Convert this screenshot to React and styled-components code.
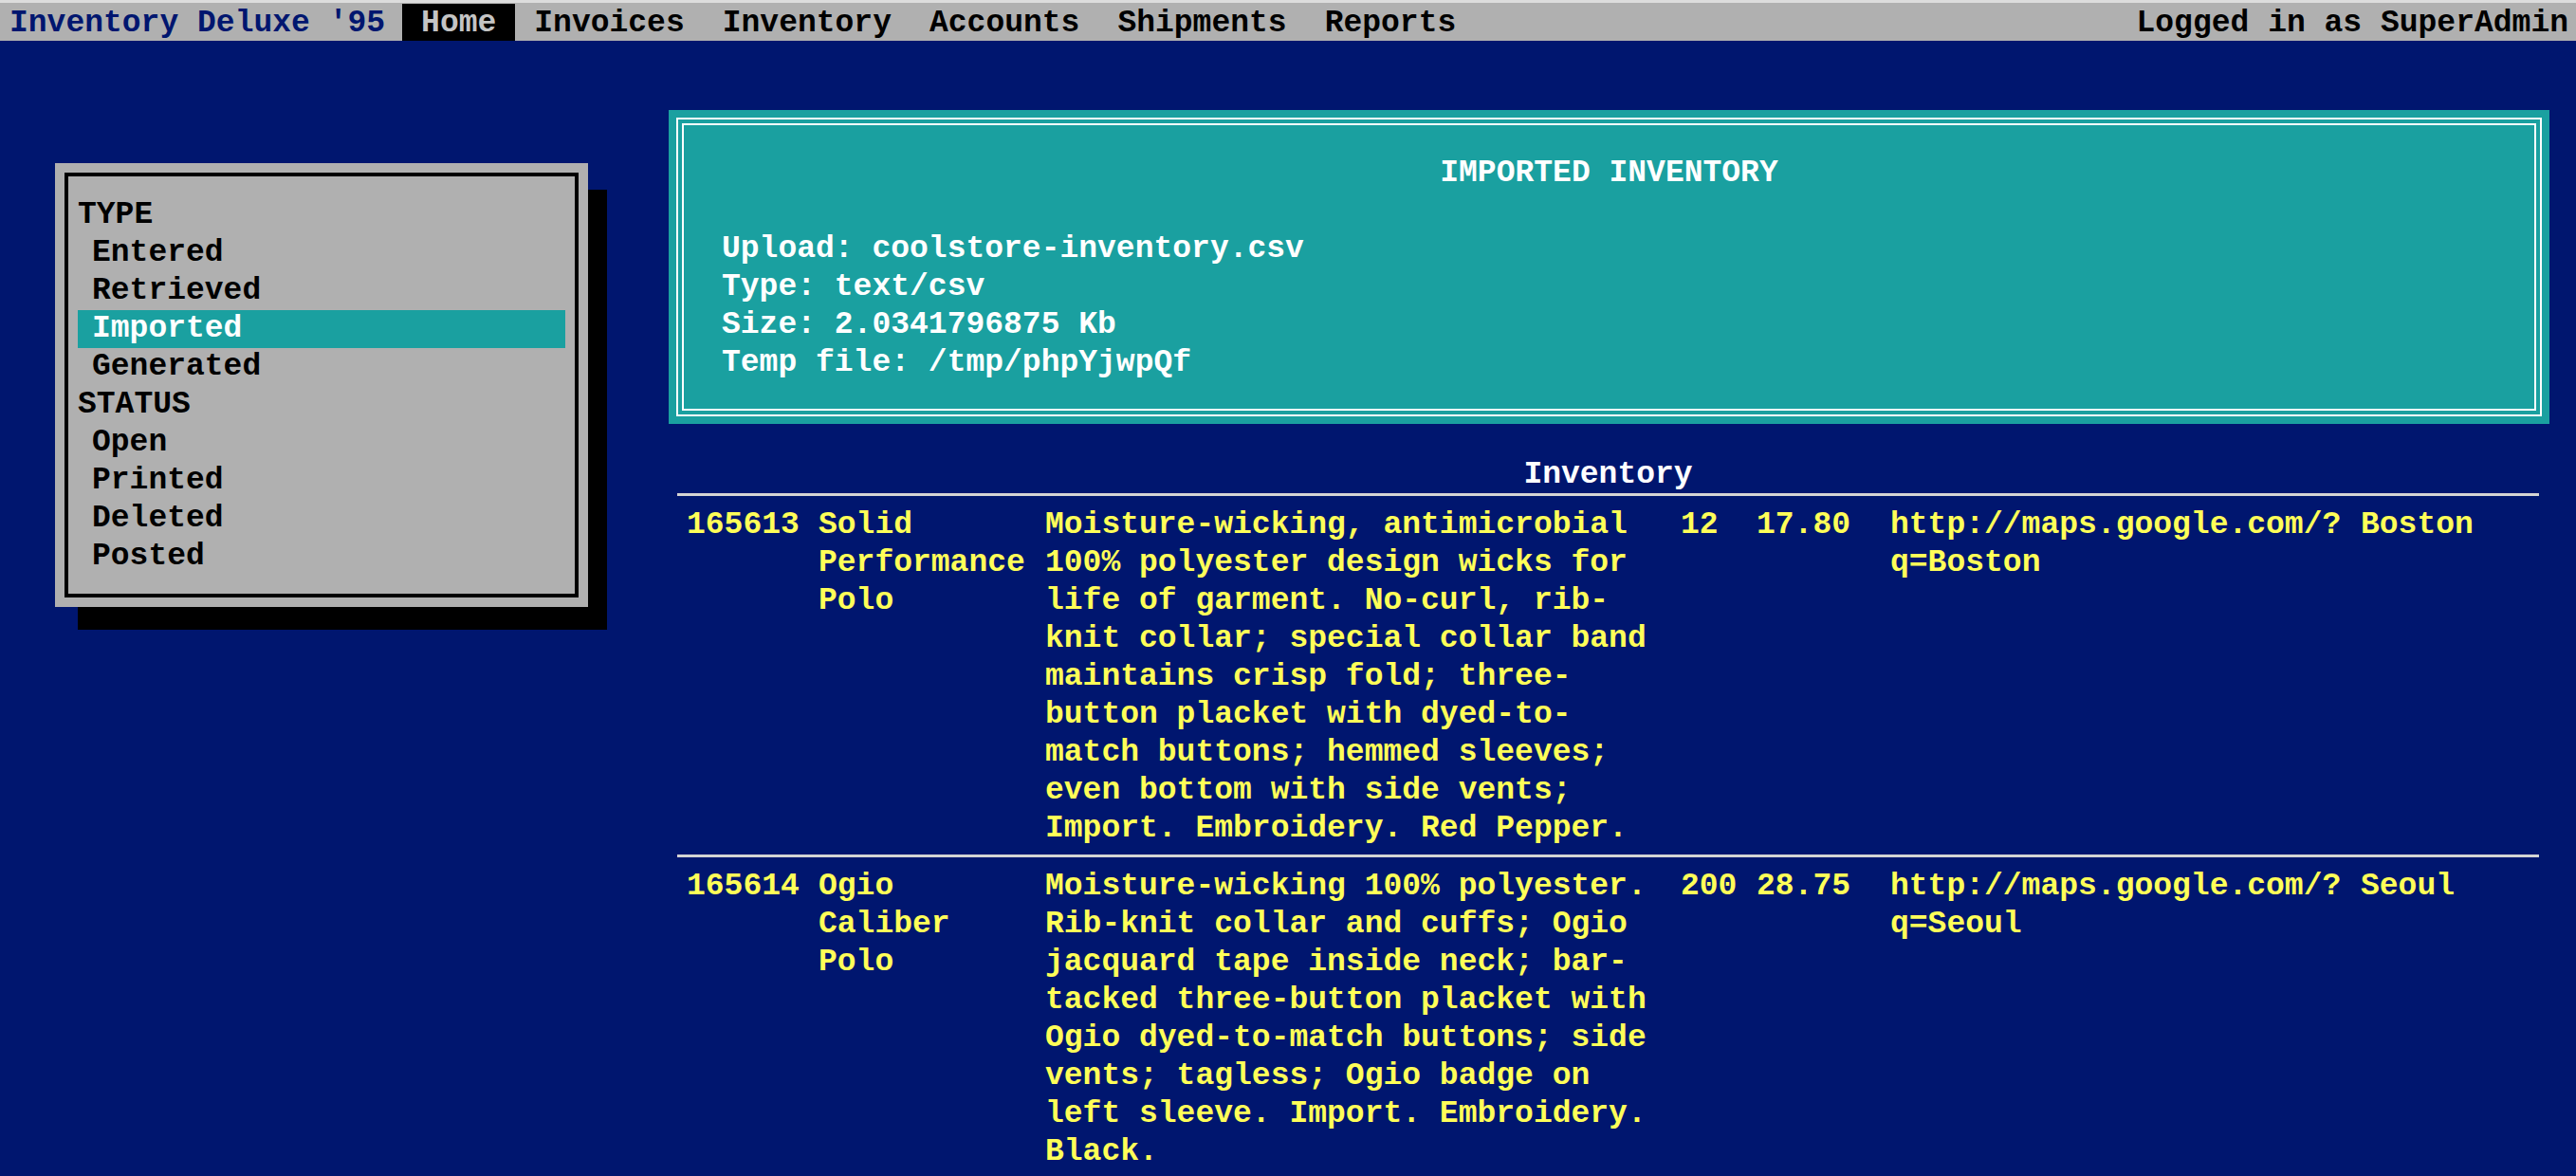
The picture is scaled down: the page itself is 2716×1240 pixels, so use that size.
import React from 'react';
import styled, { createGlobalStyle } from 'styled-components';

const NAVY = '#00166f';
const TEAL = '#1aa0a0';
const GRAY = '#b0b0b0';
const YELLOW = '#ffff58';
const RULE = '#d4d4d4';

const GlobalStyle = createGlobalStyle`
  * { box-sizing: border-box; }
  html, body {
    margin: 0;
    padding: 0;
    background: ${NAVY};
  }
  body {
    font-family: "Liberation Mono", "DejaVu Sans Mono", monospace;
    font-weight: 700;
    font-size: 33px;
    line-height: 40px;
    min-height: 100vh;
  }
`;

const NavBar = styled.nav`
  display: flex;
  align-items: stretch;
  height: 43px;
  background: ${GRAY};
  border-top: 3px solid #dcdcdc;
  padding-top: 1px;
`;

const Brand = styled.div`
  color: ${NAVY};
  padding: 2px 18px 0 10px;
  line-height: 37px;
  white-space: pre;
`;

const NavItem = styled.a`
  display: block;
  padding: 2px 20px 0;
  line-height: 37px;
  white-space: pre;
  text-decoration: none;
  color: ${(p) => (p.$active ? '#c4c4c4' : '#000')};
  background: ${(p) => (p.$active ? '#000' : 'transparent')};
`;

const NavUser = styled.div`
  margin-left: auto;
  padding: 2px 8px 0 0;
  line-height: 37px;
  color: #000;
  white-space: pre;
`;

const Layout = styled.div`
  display: flex;
  align-items: flex-start;
  padding: 0 28px 0 58px;
`;

const Sidebar = styled.aside`
  flex: 0 0 562px;
  margin-top: 129px;
  padding: 10px;
  background: ${GRAY};
  box-shadow: 22px 26px 0 -2px #000;
`;

const SideFrame = styled.div`
  border: 4px solid #000;
  padding: 21px 10px 19px;
`;

const MenuLabel = styled.div`
  color: #000;
  line-height: 40px;
`;

const MenuItem = styled.div`
  padding-left: 15px;
  line-height: 40px;
  color: ${(p) => (p.$active ? '#fff' : '#000')};
  background: ${(p) => (p.$active ? TEAL : 'transparent')};
`;

const Main = styled.main`
  flex: 1 1 auto;
  min-width: 0;
  margin: 73px 0 0 85px;
`;

const InfoPanel = styled.section`
  background: ${TEAL};
  padding: 8px;
`;

const OuterFrame = styled.div`
  border: 2px solid #fff;
  padding: 4px;
`;

const InnerFrame = styled.div`
  border: 2px solid #fff;
  padding: 31px 40px 28px;
  color: #fff;
`;

const PanelTitle = styled.h2`
  margin: 0 0 40px;
  font: inherit;
  text-align: center;
`;

const InfoLine = styled.div`
  white-space: pre;
`;

const TableSection = styled.section`
  margin: 33px 11px 0 9px;
`;

const Caption = styled.div`
  color: #fff;
  text-align: center;
  padding-top: 1px;
  line-height: 39px;
  border-bottom: 3px solid ${RULE};
`;

const Row = styled.div`
  display: grid;
  grid-template-columns: 119px 219px 650px 60px 121px 476px 1fr;
  column-gap: 20px;
  padding: 11px 0 7px 10px;
  border-bottom: 3px solid ${RULE};
  color: ${YELLOW};
`;

const Cell = styled.div`
  min-width: 0;
`;

const types = ['Entered', 'Retrieved', 'Imported', 'Generated'];
const statuses = ['Open', 'Printed', 'Deleted', 'Posted'];

const items = [
  {
    id: '165613',
    name: 'Solid Performance Polo',
    desc:
      'Moisture-wicking, antimicrobial 100% polyester design wicks for life of garment. No-curl, rib-knit collar; special collar band maintains crisp fold; three-button placket with dyed-to-match buttons; hemmed sleeves; even bottom with side vents; Import. Embroidery. Red Pepper.',
    qty: '12',
    price: '17.80',
    city: 'Boston',
  },
  {
    id: '165614',
    name: 'Ogio Caliber Polo',
    desc:
      'Moisture-wicking 100% polyester. Rib-knit collar and cuffs; Ogio jacquard tape inside neck; bar-tacked three-button placket with Ogio dyed-to-match buttons; side vents; tagless; Ogio badge on left sleeve. Import. Embroidery. Black.',
    qty: '200',
    price: '28.75',
    city: 'Seoul',
  },
];

export default function App() {
  return (
    <>
      <GlobalStyle />
      <NavBar>
        <Brand>Inventory Deluxe '95</Brand>
        <NavItem $active>Home</NavItem>
        <NavItem>Invoices</NavItem>
        <NavItem>Inventory</NavItem>
        <NavItem>Accounts</NavItem>
        <NavItem>Shipments</NavItem>
        <NavItem>Reports</NavItem>
        <NavUser>Logged in as SuperAdmin</NavUser>
      </NavBar>
      <Layout>
        <Sidebar>
          <SideFrame>
            <MenuLabel>TYPE</MenuLabel>
            {types.map((t) => (
              <MenuItem key={t} $active={t === 'Imported'}>
                {t}
              </MenuItem>
            ))}
            <MenuLabel>STATUS</MenuLabel>
            {statuses.map((s) => (
              <MenuItem key={s}>{s}</MenuItem>
            ))}
          </SideFrame>
        </Sidebar>
        <Main>
          <InfoPanel>
            <OuterFrame>
              <InnerFrame>
                <PanelTitle>IMPORTED INVENTORY</PanelTitle>
                <InfoLine>Upload: coolstore-inventory.csv</InfoLine>
                <InfoLine>Type: text/csv</InfoLine>
                <InfoLine>Size: 2.0341796875 Kb</InfoLine>
                <InfoLine>Temp file: /tmp/phpYjwpQf</InfoLine>
              </InnerFrame>
            </OuterFrame>
          </InfoPanel>
          <TableSection>
            <Caption>Inventory</Caption>
            {items.map((it) => (
              <Row key={it.id}>
                <Cell>{it.id}</Cell>
                <Cell>{it.name}</Cell>
                <Cell>{it.desc}</Cell>
                <Cell>{it.qty}</Cell>
                <Cell>{it.price}</Cell>
                <Cell>
                  http://maps.google.com/?<wbr />q={it.city}
                </Cell>
                <Cell>{it.city}</Cell>
              </Row>
            ))}
          </TableSection>
        </Main>
      </Layout>
    </>
  );
}
